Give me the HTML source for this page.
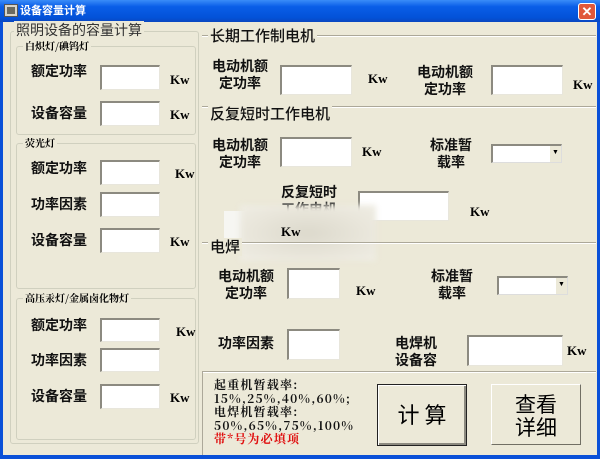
<!DOCTYPE html>
<html><head><meta charset="utf-8"><style>
*{margin:0;padding:0;box-sizing:border-box}
body{width:600px;height:459px;background:#ece9d8;position:relative;overflow:hidden;font-family:"Liberation Sans","Noto Sans CJK SC",sans-serif;}
.a{position:absolute}
.title{left:0;top:0;width:600px;height:22px;background:linear-gradient(#3a8cf8,#0a5ee8 30%,#0352d8 80%,#0a46c0);}
.fl{left:0;top:22px;width:3px;height:437px;background:#0a50d8}
.fr{right:0;top:22px;width:3px;height:437px;background:#0a50d8}
.fb{left:0;bottom:0;width:600px;height:4px;background:#0a50d8}
.in{position:absolute;background:#fff;border-top:2px solid #8c8a80;border-left:2px solid #8c8a80;border-right:1px solid #e8e6dc;border-bottom:1px solid #e8e6dc}
.grp{position:absolute;border:1px solid #d0d0bf;border-radius:3px}
.gt{position:absolute;background:#ece9d8;padding:0 2px;font-weight:bold;font-size:10px;font-family:"Noto Serif CJK SC",serif;top:-8px;left:6px;line-height:14px}
.lb{position:absolute;font-size:14px;font-weight:bold;line-height:17px;color:#111;font-family:"Noto Sans CJK SC",sans-serif;text-align:center;white-space:nowrap}
.kw{position:absolute;font-family:"Liberation Serif",serif;font-weight:bold;font-size:13px}
.hl{position:absolute;height:2px;border-top:1px solid #aca899;border-bottom:1px solid #fff}
.sec{position:absolute;font-size:15px;background:#ece9d8;padding:0 2px;font-family:"Noto Sans CJK SC",sans-serif;line-height:18px;font-weight:500;color:#111}
.cb{position:absolute;background:#fff;border-top:2px solid #8c8a80;border-left:2px solid #8c8a80;border-right:1px solid #ddd;border-bottom:1px solid #ddd}
.cb i{position:absolute;right:0;top:0;width:12px;height:100%;background:#ece9d8;border-left:1px solid #fff;font-style:normal;font-size:7px;text-align:center;line-height:14px}
</style></head><body>
<div class="a title"></div>
<div class="a" style="left:4px;top:4px;width:14px;height:13px;background:#d8d4c8;border:1px solid #555"><div style="margin:2px;width:8px;height:7px;background:#6a6a60"></div></div>
<div class="a" style="left:20px;top:3px;color:#fff;font-size:11px;font-weight:bold;font-family:'Noto Sans CJK SC',sans-serif;line-height:15px">设备容量计算</div>
<div class="a" style="left:578px;top:3px;width:18px;height:17px;background:#e0583a;border:1px solid #fff;border-radius:3px;color:#fff;font-size:13px;font-weight:bold;text-align:center;line-height:15px">✕</div>
<div class="a fl"></div><div class="a fr"></div><div class="a fb"></div>

<div class="grp" style="left:10px;top:31px;width:189px;height:413px"></div>
<div class="a" style="left:14px;top:21px;background:#ece9d8;padding:0 2px;font-size:14px;color:#333;font-family:'Noto Sans CJK SC',sans-serif;line-height:18px">照明设备的容量计算</div>

<div class="grp" style="left:16px;top:46px;width:180px;height:89px"><div class="gt">白炽灯/碘钨灯</div></div>
<div class="lb" style="left:31px;top:63px">额定功率</div><div class="in" style="left:100px;top:65px;width:60px;height:25px"></div><div class="kw" style="left:170px;top:72px">Kw</div>
<div class="lb" style="left:31px;top:105px">设备容量</div><div class="in" style="left:100px;top:101px;width:60px;height:25px"></div><div class="kw" style="left:170px;top:107px">Kw</div>

<div class="grp" style="left:16px;top:143px;width:180px;height:146px"><div class="gt">荧光灯</div></div>
<div class="lb" style="left:31px;top:160px">额定功率</div><div class="in" style="left:100px;top:160px;width:60px;height:25px"></div><div class="kw" style="left:175px;top:166px">Kw</div>
<div class="lb" style="left:31px;top:196px">功率因素</div><div class="in" style="left:100px;top:192px;width:60px;height:25px"></div>
<div class="lb" style="left:31px;top:232px">设备容量</div><div class="in" style="left:100px;top:228px;width:60px;height:25px"></div><div class="kw" style="left:170px;top:234px">Kw</div>

<div class="grp" style="left:16px;top:298px;width:180px;height:142px"><div class="gt">高压汞灯/金属卤化物灯</div></div>
<div class="lb" style="left:31px;top:317px">额定功率</div><div class="in" style="left:100px;top:318px;width:60px;height:24px"></div><div class="kw" style="left:176px;top:324px">Kw</div>
<div class="lb" style="left:31px;top:352px">功率因素</div><div class="in" style="left:100px;top:348px;width:60px;height:24px"></div>
<div class="lb" style="left:31px;top:388px">设备容量</div><div class="in" style="left:100px;top:384px;width:60px;height:25px"></div><div class="kw" style="left:170px;top:390px">Kw</div>

<div class="hl" style="left:202px;top:35px;width:394px"></div>
<div class="sec" style="left:208px;top:27px">长期工作制电机</div>
<div class="lb" style="left:212px;top:58px">电动机额<br>定功率</div><div class="in" style="left:280px;top:65px;width:72px;height:30px"></div><div class="kw" style="left:368px;top:71px">Kw</div>
<div class="lb" style="left:417px;top:64px">电动机额<br>定功率</div><div class="in" style="left:491px;top:65px;width:72px;height:30px"></div><div class="kw" style="left:573px;top:77px">Kw</div>

<div class="hl" style="left:202px;top:106px;width:394px"></div>
<div class="sec" style="left:208px;top:105px">反复短时工作电机</div>
<div class="lb" style="left:212px;top:137px">电动机额<br>定功率</div><div class="in" style="left:280px;top:137px;width:72px;height:30px"></div><div class="kw" style="left:362px;top:144px">Kw</div>
<div class="lb" style="left:430px;top:137px">标准暂<br>载率</div><div class="cb" style="left:491px;top:144px;width:71px;height:19px"><i>▼</i></div>
<div class="lb" style="left:281px;top:184px">反复短时<br>工作电机</div><div class="in" style="left:358px;top:191px;width:91px;height:30px"></div><div class="kw" style="left:470px;top:204px">Kw</div>
<div class="a" style="left:224px;top:211px;width:36px;height:30px;background:#f6f6f2"></div>
<div class="a" style="left:240px;top:205px;width:136px;height:56px;background:radial-gradient(ellipse at center,#dcd9cc 0%,#e9e6db 60%,#efede4 100%);filter:blur(3px)"></div>
<div class="kw" style="left:281px;top:224px">Kw</div>

<div class="hl" style="left:202px;top:242px;width:394px"></div>
<div class="sec" style="left:208px;top:238px">电焊</div>
<div class="lb" style="left:218px;top:268px">电动机额<br>定功率</div><div class="in" style="left:287px;top:268px;width:53px;height:31px"></div><div class="kw" style="left:356px;top:283px">Kw</div>
<div class="lb" style="left:431px;top:268px">标准暂<br>载率</div><div class="cb" style="left:497px;top:276px;width:71px;height:19px"><i>▼</i></div>
<div class="lb" style="left:218px;top:335px">功率因素</div><div class="in" style="left:287px;top:329px;width:53px;height:31px"></div>
<div class="lb" style="left:395px;top:335px">电焊机<br>设备容</div><div class="in" style="left:467px;top:335px;width:96px;height:31px"></div><div class="kw" style="left:567px;top:343px">Kw</div>

<div class="hl" style="left:202px;top:371px;width:394px"></div>
<div class="a" style="left:202px;top:372px;width:1px;height:83px;background:#aca899"></div>
<div class="a" style="left:214px;top:378px;font-family:'Noto Serif CJK SC','Liberation Serif',serif;font-weight:bold;font-size:12px;line-height:13.5px;letter-spacing:1.2px;color:#111">起重机暂载率:<br>15%,25%,40%,60%;<br>电焊机暂载率:<br>50%,65%,75%,100%<br><span style="color:#e01010">带*号为必填项</span></div>
<div class="a" style="left:377px;top:384px;width:90px;height:62px;border:1px solid #222;background:#ece9d8;box-shadow:inset 1px 1px #fff,inset -2px -2px #8c8a80;text-align:center;font-size:22px;line-height:58px;font-family:'Noto Sans CJK SC',sans-serif">计 算</div>
<div class="a" style="left:491px;top:384px;width:90px;height:61px;background:#ece9d8;border-top:1px solid #fff;border-left:1px solid #fff;border-right:1px solid #716f64;border-bottom:1px solid #716f64;text-align:center;font-size:21px;line-height:23px;padding-top:8px;font-family:'Noto Sans CJK SC',sans-serif">查看<br>详细</div>
</body></html>
